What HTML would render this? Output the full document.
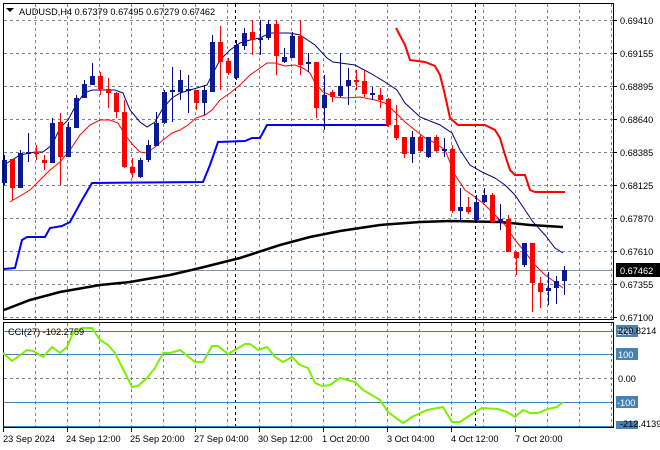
<!DOCTYPE html>
<html><head><meta charset="utf-8"><style>
html,body{margin:0;padding:0;background:#fff;width:660px;height:450px;overflow:hidden}
svg{display:block}
text{font-family:"Liberation Sans",sans-serif;font-size:9.2px;fill:#000}
</style></head><body>
<svg width="660" height="450" viewBox="0 0 660 450" xmlns="http://www.w3.org/2000/svg">
<rect width="660" height="450" fill="#fff"/>
<g stroke="#7a8594" stroke-width="1" stroke-dasharray="3,3" fill="none">
<path d="M4 20.5H613M4 53.5H613M4 86.5H613M4 119.5H613M4 152.5H613M4 185.5H613M4 218.5H613M4 251.5H613M4 284.5H613M4 317.5H613"/>
<path d="M35.5 4V319M67.5 4V319M99.5 4V319M131.5 4V319M163.5 4V319M195.5 4V319M227.5 4V319M259.5 4V319M291.5 4V319M323.5 4V319M355.5 4V319M387.5 4V319M419.5 4V319M451.5 4V319M483.5 4V319M515.5 4V319M547.5 4V319M579.5 4V319M611.5 4V319"/>
<path d="M35.5 323V427M67.5 323V427M99.5 323V427M131.5 323V427M163.5 323V427M195.5 323V427M227.5 323V427M259.5 323V427M291.5 323V427M323.5 323V427M355.5 323V427M387.5 323V427M419.5 323V427M451.5 323V427M483.5 323V427M515.5 323V427M547.5 323V427M579.5 323V427M611.5 323V427"/>
<path d="M4 378.5H613"/>
</g>
<g stroke="#000" stroke-dasharray="3,3"><path d="M235.5 4V427M475.5 4V427"/></g>
<path d="M4 270.5H613" stroke="#8a96a4"/>
<polyline fill="none" stroke="#000" stroke-width="2.5" points="4,310 30,300 60,292 100,285 130,282 170,275 200,268 240,258 280,245 310,237 340,231 380,225 420,222 450,221 500,222 530,225 563,227"/>
<polyline fill="none" stroke="#0000ff" stroke-width="2" points="4,269 15,268 22,240 27,237 45,237 50,228 62,226 70,222 82,200 92,183 203,182 210,165 218,142 245,141 252,138 260,138 267,125 388,125"/>
<polyline fill="none" stroke="#ff0000" stroke-width="2" points="396,28 405,45 410,60 425,62 435,66 440,75 445,95 450,118 458,125 485,125 495,130 500,138 505,155 510,170 515,175 525,175 530,190 535,192 565,192"/>
<polyline fill="none" stroke="#000080" stroke-width="1" points="4,165 20,155 35,152 43,152 52,145 60,128 68,120 76,105 84,93 92,90 115,90 123,93 130,110 140,122 147,127 155,122 163,108 172,98 180,93 190,90 207,85 212,75 220,60 230,50 240,43 250,40 260,38 270,33 290,33 300,35 315,45 327,58 333,62 355,65 370,73 385,82 397,90 405,103 420,117 440,125 452,133 460,150 470,165 482,172 495,178 505,185 515,195 525,210 533,222 545,235 555,248 563,253"/>
<polyline fill="none" stroke="#ff0000" stroke-width="1" points="10,202 30,190 40,180 50,170 60,162 70,150 80,135 90,125 100,120 110,120 118,123 125,135 133,145 140,152 147,153 155,147 163,140 172,133 180,130 188,125 196,118 205,115 212,110 220,100 230,93 240,85 250,75 260,68 267,63 275,63 285,66 295,65 303,68 310,73 315,83 323,92 335,97 345,98 360,97 375,100 385,103 395,112 405,122 415,130 425,138 435,143 445,150 455,175 465,190 475,197 485,205 495,215 505,225 515,240 525,252 535,265 545,275 555,282 563,288"/>
<path fill="none" stroke="#000080" d="M4.5 155V185M20.5 150V188M28.5 133V162M52.5 118V163M68.5 122V157M76.5 95V128M84.5 80V98M92.5 63V85M140.5 158V178M148.5 140V162M156.5 112V146M164.5 90V124M172.5 67V122M180.5 70V100M188.5 75V113M204.5 85V115M212.5 35V92M236.5 40V80M244.5 28V50M260.5 20V55M268.5 20V40M284.5 48V63M292.5 32V58M308.5 53V72M324.5 75V130M340.5 53V97M348.5 68V105M372.5 87V100M412.5 131V163M428.5 137V158M444.5 138V157M460.5 188V221M476.5 195V221M484.5 188V203M500.5 204V230M524.5 243V267M548.5 272V305M556.5 276V304M564.5 266V295"/>
<path fill="none" stroke="#ff0000" d="M12.5 159V200M36.5 145V160M44.5 155V170M60.5 113V185M100.5 72V95M108.5 78V108M116.5 92V118M124.5 100V168M132.5 158V178M196.5 90V110M220.5 26V90M228.5 58V75M252.5 20V55M276.5 20V75M300.5 20V75M316.5 62V118M332.5 90V102M356.5 70V90M364.5 70V97M380.5 88V108M388.5 98V127M396.5 105V140M404.5 137V158M420.5 135V152M436.5 135V152M452.5 145V213M468.5 197V214M492.5 193V223M508.5 215V252M516.5 252V275M532.5 243V312M540.5 277V308"/>
<g fill="#0a1a90">
<rect x="2" y="160" width="5" height="23"/><rect x="18" y="153" width="5" height="35"/><rect x="26" y="152" width="5" height="2"/><rect x="50" y="123" width="5" height="40"/><rect x="66" y="127" width="5" height="30"/><rect x="74" y="98" width="5" height="30"/><rect x="82" y="84" width="5" height="14"/><rect x="90" y="76" width="5" height="9"/><rect x="138" y="160" width="5" height="17"/><rect x="146" y="145" width="5" height="15"/><rect x="154" y="123" width="5" height="23"/><rect x="162" y="92" width="5" height="31"/><rect x="170" y="90" width="5" height="2"/><rect x="178" y="80" width="5" height="12"/><rect x="186" y="89" width="5" height="2"/><rect x="202" y="90" width="5" height="13"/><rect x="210" y="42" width="5" height="50"/><rect x="234" y="45" width="5" height="33"/><rect x="242" y="33" width="5" height="13"/><rect x="258" y="38" width="5" height="2"/><rect x="266" y="24" width="5" height="14"/><rect x="282" y="57" width="5" height="5"/><rect x="290" y="36" width="5" height="22"/><rect x="306" y="62" width="5" height="2"/><rect x="322" y="95" width="5" height="13"/><rect x="338" y="86" width="5" height="10"/><rect x="346" y="80" width="5" height="6"/><rect x="370" y="93" width="5" height="2"/><rect x="410" y="137" width="5" height="17"/><rect x="426" y="137" width="5" height="20"/><rect x="442" y="149" width="5" height="2"/><rect x="458" y="207" width="5" height="4"/><rect x="474" y="202" width="5" height="18"/><rect x="482" y="195" width="5" height="7"/><rect x="498" y="219" width="5" height="3"/><rect x="522" y="243" width="5" height="22"/><rect x="546" y="288" width="5" height="3"/><rect x="554" y="281" width="5" height="7"/><rect x="562" y="270" width="5" height="11"/>
</g>
<g fill="#ff0000">
<rect x="10" y="159" width="5" height="29"/><rect x="34" y="152" width="5" height="2"/><rect x="42" y="160" width="5" height="3"/><rect x="58" y="122" width="5" height="35"/><rect x="98" y="76" width="5" height="13"/><rect x="106" y="89" width="5" height="4"/><rect x="114" y="93" width="5" height="19"/><rect x="122" y="112" width="5" height="55"/><rect x="130" y="167" width="5" height="6"/><rect x="194" y="90" width="5" height="13"/><rect x="218" y="42" width="5" height="20"/><rect x="226" y="61" width="5" height="12"/><rect x="250" y="32" width="5" height="8"/><rect x="274" y="24" width="5" height="32"/><rect x="298" y="36" width="5" height="29"/><rect x="314" y="62" width="5" height="46"/><rect x="330" y="92" width="5" height="5"/><rect x="354" y="80" width="5" height="2"/><rect x="362" y="81" width="5" height="13"/><rect x="378" y="95" width="5" height="5"/><rect x="386" y="99" width="5" height="26"/><rect x="394" y="125" width="5" height="13"/><rect x="402" y="137" width="5" height="17"/><rect x="418" y="137" width="5" height="14"/><rect x="434" y="137" width="5" height="14"/><rect x="450" y="149" width="5" height="62"/><rect x="466" y="207" width="5" height="5"/><rect x="490" y="195" width="5" height="27"/><rect x="506" y="219" width="5" height="33"/><rect x="514" y="252" width="5" height="6"/><rect x="530" y="243" width="5" height="40"/><rect x="538" y="283" width="5" height="9"/>
</g>
<rect x="3.5" y="3.5" width="610" height="316" fill="none" stroke="#000"/>
<rect x="3.5" y="322.5" width="610" height="105" fill="none" stroke="#000"/>
<path d="M6 8h8l-4 4z" fill="#000"/>
<text x="19" y="15">AUDUSD,H4  0.67379 0.67495 0.67279 0.67462</text>
<g stroke="#000"><path d="M613 20.5h4M613 53.5h4M613 86.5h4M613 119.5h4M613 152.5h4M613 185.5h4M613 218.5h4M613 251.5h4M613 284.5h4M613 317.5h4"/></g>
<text x="620" y="24">0.69410</text><text x="620" y="57">0.69155</text><text x="620" y="90">0.68895</text><text x="620" y="123">0.68640</text><text x="620" y="156">0.68385</text><text x="620" y="189">0.68125</text><text x="620" y="222">0.67870</text><text x="620" y="255">0.67610</text><text x="620" y="288">0.67355</text><text x="620" y="321">0.67100</text>
<rect x="616" y="263" width="44" height="14" fill="#000"/>
<text x="620" y="274" style="fill:#fff">0.67462</text>
<g stroke="#4682b4"><path d="M4 331.5H613M4 354.5H613M4 402.5H613M4 426.5H613"/></g>
<polyline fill="none" stroke="#7cf000" stroke-width="2" points="3,353 12,361 27,350 33,351 43,357 52,347 60,353 67,347 73,333 82,328 92,328 100,340 108,345 115,353 132,387 138,386 147,378 155,368 163,353 170,353 180,350 195,362 203,362 212,346 218,346 228,354 245,344 250,344 258,350 267,347 275,357 283,362 292,357 300,365 308,368 315,383 322,386 330,385 340,378 355,382 363,390 380,400 388,412 403,423 412,417 427,410 443,407 452,422 460,422 475,412 482,408 498,409 507,412 515,417 523,410 530,413 538,413 548,409 557,407 563,402"/>
<text x="8" y="335">CCI(27) -102.2759</text>
<rect x="616" y="325" width="22" height="12" fill="#4682b4"/>
<text x="617" y="335" style="fill:#fff">200</text>
<text x="618" y="334">229.8214</text>
<rect x="616" y="348" width="22" height="12" fill="#4682b4"/><text x="618" y="358" style="fill:#fff">100</text>
<text x="618" y="382">0.00</text>
<rect x="616" y="396" width="22" height="12" fill="#4682b4"/><text x="617" y="406" style="fill:#fff">-100</text>
<rect x="616" y="421" width="22" height="8" fill="#4682b4"/>
<text x="620" y="427">-212.4139</text>
<g stroke="#000"><path d="M3.5 428v4M67.5 428v4M131.5 428v4M195.5 428v4M259.5 428v4M323.5 428v4M387.5 428v4M451.5 428v4M515.5 428v4"/></g>
<text x="3" y="442">23 Sep 2024</text><text x="66" y="442">24 Sep 12:00</text><text x="130" y="442">25 Sep 20:00</text><text x="194" y="442">27 Sep 04:00</text><text x="258" y="442">30 Sep 12:00</text><text x="322" y="442">1 Oct 20:00</text><text x="387" y="442">3 Oct 04:00</text><text x="451" y="442">4 Oct 12:00</text><text x="515" y="442">7 Oct 20:00</text>
</svg>
</body></html>
